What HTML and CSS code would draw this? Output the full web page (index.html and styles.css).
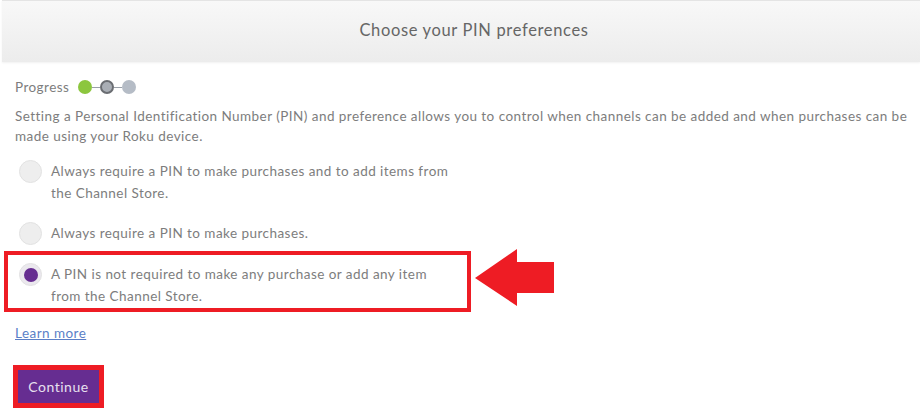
FILE: index.html
```html
<!DOCTYPE html>
<html lang="en">
<head>
<meta charset="utf-8">
<title>Choose your PIN preferences</title>
<link rel="stylesheet" href="styles.css">
</head>
<body>
<header class="top">
  <h1 class="title">Choose your PIN preferences</h1>
</header>
<main class="content">
  <div class="progress">
    <span class="progress-label">Progress</span>
    <span class="dot dot-done"></span>
    <span class="link"></span>
    <span class="dot dot-current"></span>
    <span class="link"></span>
    <span class="dot dot-next"></span>
  </div>
  <p class="intro">Setting a Personal Identification Number (PIN) and preference allows you to control when channels can be added and when purchases can be made using your Roku device.</p>
  <div class="options">
    <label class="option">
      <span class="radio"></span>
      <span class="option-text">Always require a PIN to make purchases and to add items from<br>the Channel Store.</span>
    </label>
    <label class="option option-2">
      <span class="radio"></span>
      <span class="option-text">Always require a PIN to make purchases.</span>
    </label>
    <div class="highlight">
      <label class="option">
        <span class="radio radio-on"></span>
        <span class="option-text">A PIN is not required to make any purchase or add any item<br>from the Channel Store.</span>
      </label>
      <svg class="arrow" width="80" height="58" viewBox="0 0 80 58">
        <polygon points="0,29 42,0 42,13 79,13 79,44 42,44 42,57" fill="#ee1c24"/>
      </svg>
    </div>
  </div>
  <a class="learn" href="#">Learn more</a>
  <div class="btn-frame">
    <button class="btn" type="button">Continue</button>
  </div>
</main>
</body>
</html>
```

FILE: styles.css
```css
* { box-sizing: border-box; }
html, body { margin: 0; padding: 0; background: #fff; }
body {
  width: 920px;
  height: 410px;
  overflow: hidden;
  font-family: "Lato", "Open Sans", sans-serif;
  color: #7d7d7d;
}
.top {
  height: 62px;
  margin-left: 2px;
  background: linear-gradient(#f8f8f8, #ececec);
  border-top: 1px solid #e4e4e4;
  box-shadow: 0 1px 2px rgba(0,0,0,0.06);
  display: flex;
  align-items: center;
  justify-content: center;
}
.title {
  margin: 0 0 4px 26px;
  font-size: 16.5px;
  font-weight: 400;
  color: #666;
  letter-spacing: 0.65px;
}
.content {
  padding: 15px 0 0 15px;
}
.progress {
  display: flex;
  align-items: center;
  height: 20px;
  font-size: 13.5px;
  letter-spacing: 0.45px;
}
.progress-label { margin-right: 9px; }
.dot {
  width: 14px;
  height: 14px;
  border-radius: 50%;
}
.dot-done { background: #8cc63e; }
.dot-current { background: #a9aeb5; border: 2px solid #6a6d72; }
.dot-next { background: #b5bcc6; }
.link { width: 8px; height: 1px; background: #9aa0a8; }
.intro {
  margin: 9px 0 0;
  font-size: 13.5px;
  line-height: 20px;
  letter-spacing: 0.45px;
  padding-right: 4px;
}
.options {
  margin-top: 14px;
  display: flex;
  flex-direction: column;
}
.option {
  display: flex;
  align-items: flex-start;
  font-size: 13.5px;
  line-height: 22px;
  letter-spacing: 0.45px;
}
.option-2 { margin-top: 18px; }
.radio {
  flex: none;
  width: 23px;
  height: 23px;
  margin: 0 9px 0 4px;
  border-radius: 50%;
  background: #eeeeee;
  border: 1px solid #e2e2e2;
  display: flex;
  align-items: center;
  justify-content: center;
}
.radio-on { background: #ebe8ee; }
.radio-on::after {
  content: "";
  width: 14px;
  height: 14px;
  border-radius: 50%;
  background: #662d91;
}
.highlight {
  position: relative;
  margin: 6px 0 0 -11px;
  width: 467px;
  height: 61px;
  border: 4px solid #ee1c24;
  padding: 8px 0 0 7px;
}
.arrow {
  position: absolute;
  left: 467px;
  top: -6px;
}
.learn {
  display: block;
  margin-top: 11px;
  font-size: 13.5px;
  line-height: 20px;
  letter-spacing: 0.45px;
  color: #5b7fc7;
  text-decoration: underline;
  width: max-content;
}
.btn-frame {
  margin: 22px 0 0 -2px;
  width: 91px;
  height: 43px;
  border: 5px solid #ee1c24;
}
.btn {
  display: block;
  width: 100%;
  height: 100%;
  border: 0;
  padding: 0;
  background: #662d91;
  color: #e8e0ef;
  font-family: "Lato", "Open Sans", sans-serif;
  font-size: 14px;
  letter-spacing: 0.5px;
}
```
